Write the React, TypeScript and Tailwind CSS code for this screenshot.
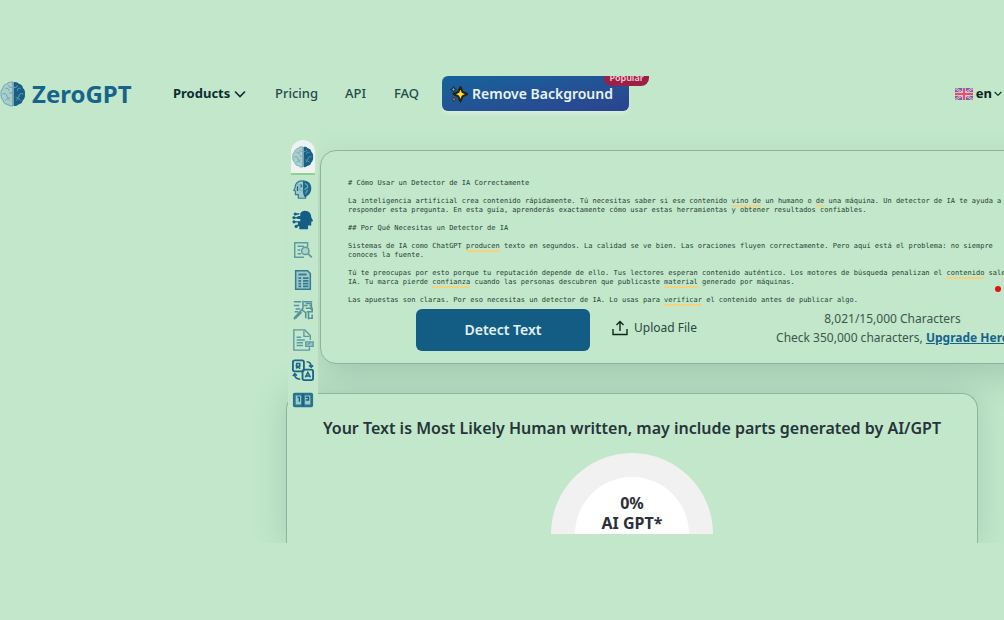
import type { ReactNode } from "react";
import clsx from "clsx";

const Hl = ({ children }: { children: ReactNode }) => (
  <span className="border-b-2 border-[#f7d27c]">{children}</span>
);

const Brain = ({ className }: { className?: string }) => (
  <svg viewBox="0 0 24 24" className={className} aria-hidden="true">
    <path
      d="M11.5 1C9 .6 7.500 1.500 6.700 2.500 4.500 3 3 4.600 2.800 6.500 1.200 8 .600 10 1 12c-.4 2.500.4 4.500 2 6 .3 2 2 3.400 4 3.600 1.200 1.200 2.800 1.600 4.500 1.400z"
      fill="#a9cfcd"
      stroke="#78a9b5"
      strokeWidth="1"
    />
    <path
      d="M5 7c2-1 3 0 3 2M2.500 12c2-1 4 0 4 2s2 2 3 1M5 18c1-2 3-2 4 0M8 4c0 2 2 2 3 2M8.500 11h3"
      fill="none"
      stroke="#6a9eb0"
      strokeWidth="0.900"
    />
    <path
      d="M12.500 1c2.500-.4 4 .5 4.800 1.500 2.200.5 3.700 2.100 3.900 4C22.800 8 23.400 10 23 12c.4 2.500-.4 4.500-2 6-.3 2-2 3.400-4 3.600-1.200 1.200-2.800 1.600-4.500 1.400z"
      fill="#175f86"
    />
    <path
      d="M19 7c-2-1-3 0-3 2M21.500 12c-2-1-4 0-4 2s-2 2-3 1M19 18c-1-2-3-2-4 0M16 4c0 2-2 2-3 2"
      fill="none"
      stroke="#6ba3b5"
      strokeWidth="0.900"
    />
  </svg>
);

const Chevron = ({ className }: { className?: string }) => (
  <svg viewBox="0 0 12 8" className={className} fill="none" stroke="currentColor" strokeWidth="1.600" aria-hidden="true">
    <path d="M1 1.500 6 6.500 11 1.500" />
  </svg>
);

const Sparkles = () => (
  <svg viewBox="0 0 18 18" className="size-[18px]" aria-hidden="true">
    <path
      d="M10.500 2 12.500 7 17.500 9 12.500 11.300 10.500 16.500 8.300 11.300 3.500 9 8.300 7z"
      fill="#ffe02e"
      stroke="#22211a"
      strokeWidth="2"
      strokeLinejoin="round"
    />
    <path d="M3.500 1.500 4.300 3.700 6.500 4.500 4.300 5.300 3.500 7.500 2.700 5.300.500 4.500 2.700 3.700z" fill="#55b7e8" stroke="#22211a" />
    <path d="M4 12 4.700 13.500 6.200 14.200 4.700 14.900 4 16.500 3.300 14.900 1.800 14.200 3.300 13.500z" fill="#ef6a72" stroke="#22211a" strokeWidth="0.600" />
  </svg>
);

const UkFlag = () => (
  <svg viewBox="0 0 18 12" className="h-3 w-[18px]" aria-hidden="true">
    <path d="M0 0h18v12H0z" fill="#5a70ad" />
    <path d="M0 0 18 12M18 0 0 12" stroke="#e3c9dc" strokeWidth="2.200" />
    <path d="M0 0 18 12M18 0 0 12" stroke="#e0566d" strokeWidth="1" />
    <path d="M9 0v12M0 6h18" stroke="#f0d5df" strokeWidth="3.600" />
    <path d="M9 0v12M0 6h18" stroke="#e2506a" strokeWidth="2.200" />
  </svg>
);

const tools: { label: string; icon: ReactNode; faded?: boolean }[] = [
  {
    label: "AI humanizer",
    icon: (
      <>
        <path d="M11 2C5.500 2 3.500 6 3.500 9L2 12.500l1.700.6V17h3.200v4h8v-4c3.500-2 5.100-4.600 5.100-8 0-4.500-4-7-9-7z" fill="#9dc9c8" stroke="#367c95" strokeWidth="1.300" />
        <path d="M12 2c6 0 9 3.500 9 8 0 5-3.500 9-7.500 9.500L12 15z" fill="#1c698c" />
        <path d="M7 7c2-2 4-1 4 1s-3 1-3 3 3 2 4 1M14 5c2 1 4 2 3 4s-3 1-3 3M17 12c-1 2-2 2-2 4" fill="none" stroke="#76b0b9" strokeWidth="1.200" />
        <path d="M6 8v5M10 6v3" stroke="#175f86" strokeWidth="1.300" />
      </>
    ),
  },
  {
    label: "AI chat",
    icon: (
      <>
        <path d="M14 2c5 0 7 3.500 7 7l2 4-2 .8V18h-3.500v4H8v-4.500H6.500v-4H9V11H6V7.500h3V4.800C10 3 12 2 14 2z" fill="#145d86" />
        <path d="M8 5.500H4M8 9.500H2.500M9 14H3M9 18H5" stroke="#145d86" strokeWidth="1.500" />
        <circle cx="3.500" cy="5.500" r="1.700" fill="#145d86" />
        <circle cx="2" cy="9.500" r="1.600" fill="#145d86" />
        <circle cx="2.200" cy="14" r="1.700" fill="#145d86" />
        <circle cx="4.500" cy="19" r="1.700" fill="#145d86" />
      </>
    ),
  },
  {
    label: "Plagiarism checker",
    faded: true,
    icon: (
      <g fill="none" stroke="#347b91" strokeWidth="1.600">
        <path d="M13 20H3V4h14v5" />
        <path d="M6 8h7M6 12h3M6 16h4" />
        <circle cx="14.500" cy="13" r="4" fill="#a4cdc9" />
        <path d="m17.500 16 4 4" strokeWidth="2" />
      </g>
    ),
  },
  {
    label: "Summarizer",
    icon: (
      <g fill="none" stroke="#347b91" strokeWidth="1.600">
        <path d="M4 2h13l3 3v17H4z" fill="#9fc9c8" />
        <path d="M7 6h9" strokeWidth="2" />
        <path d="M7 10h3M12 10h6M7 13h3M12 13h6M7 16h3M12 16h6M7 19h3M12 19h6" strokeWidth="2" />
      </g>
    ),
  },
  {
    label: "Paraphraser",
    faded: true,
    icon: (
      <g fill="none" stroke="#28718c" strokeWidth="1.700">
        <path d="M2 3h8M2 7h6M4 11h5M13 3h9M13 7h4M19 7h3" />
        <path d="M12 2v8l-4 5-6 7M10 11l5 4v6M15 10h7v4h-6M18 14v8M22 17v4h-5M15 5h6v7M3 14h4" />
        <path d="m3 21 7-7" strokeWidth="3" />
      </g>
    ),
  },
  {
    label: "Grammar checker",
    faded: true,
    icon: (
      <g fill="none" stroke="#347b91" strokeWidth="1.500">
        <path d="M20 12V7l-6-6H2v22h17v-3" />
        <path d="M13 2v6h6M5 9h5M5 12h9M5 15h7M5 18h7" />
        <path d="M15 14h8v5h-8zM17 17l3-2" fill="#8fbfc1" />
      </g>
    ),
  },
  {
    label: "Translator",
    icon: (
      <g fill="none" stroke="#1b658a" strokeWidth="2">
        <rect x="1" y="1.500" width="12" height="12" rx="2" />
        <rect x="11.500" y="11.500" width="11.500" height="11.500" rx="2" />
        <path d="M5 10.500V5h3.500v3H5.500L9 10.500M14.500 20l2.800-5.500 2.800 5.500M16 18.500h3" strokeWidth="1.600" />
        <path d="M16 3c3 0 5 2 5 6m-2.500-2L21 9l2-2M9 22c-4 0-6-2-6-5m-2 1.500L3 16l2.500 2" strokeWidth="1.700" />
      </g>
    ),
  },
  {
    label: "Word counter",
    icon: (
      <>
        <rect x="1" y="4" width="22" height="16" rx="2" fill="#287390" />
        <path d="M4 7h6v10H4zM14 7h6v10h-6z" fill="#9ccbca" />
        <path d="M6 9h2v5M15 9h3v3h-3M12 5v14" fill="none" stroke="#175f86" strokeWidth="1.500" />
      </>
    ),
  },
];

const Header = () => (
  <header className="flex h-[35px] items-center whitespace-nowrap">
    <a href="#" className="flex w-[173px] shrink-0 items-center gap-1.5 text-2xl font-bold text-[#18638a]">
      <Brain className="size-[26px]" />
      ZeroGPT
    </a>
    <nav className="flex items-center text-[13px] font-medium text-[#1f4a4b]">
      <button className="flex w-[102px] items-center gap-1 font-bold text-[#0d2c35]">
        Products
        <Chevron className="w-3" />
      </button>
      <a href="#" className="w-[70px]">Pricing</a>
      <a href="#" className="w-[49px]">API</a>
      <a href="#" className="w-12">FAQ</a>
    </nav>
    <button className="relative flex h-[35px] w-[187px] shrink-0 items-center gap-1 rounded-md bg-linear-to-br from-[#13639a] to-[#2b4390] pl-2 text-sm font-semibold text-[#e9f3f8] shadow-md shadow-white/30">
      <Sparkles />
      Remove Background
      <span className="absolute -top-2 -right-5 flex h-[18px] w-[45px] items-center justify-center rounded-lg bg-[#9d1f46] text-[9px] leading-none text-[#f3ccd5]">
        Popular
      </span>
    </button>
    <button className="ml-auto flex items-center gap-0.5 pr-0.5 text-[13px] font-bold text-[#0b2419]">
      <UkFlag />
      <span className="ml-px">en</span>
      <Chevron className="w-2" />
    </button>
  </header>
);

const ToolRail = () => (
  <aside className="absolute top-16 left-[288px] z-10 flex w-[30px] flex-col items-center bg-[#c2e7ca]">
    <button aria-label="AI detector" className="flex h-[35px] w-6 items-center justify-center rounded-t-xl border-b-2 border-[#8fd093] bg-[#eef3f1]">
      <Brain className="size-[22px]" />
    </button>
    {tools.map((tool) => (
      <button key={tool.label} aria-label={tool.label} className="flex h-[30px] items-center">
        <svg viewBox="0 0 24 24" className={clsx("size-[22px]", tool.faded && "opacity-70")}>
          {tool.icon}
        </svg>
      </button>
    ))}
  </aside>
);

const Editor = () => (
  <section className="-mr-10 ml-80 rounded-2xl border border-[#8fb49d] bg-[#c2e7ca] pt-7 pb-3 pl-[27px] shadow-[0_14px_32px_rgba(90,130,120,0.28)]">
    <div className="flex flex-col gap-[9px] font-['DejaVu_Sans_Mono','Liberation_Mono',monospace] text-[7px] leading-[9px] whitespace-nowrap text-[#263f35]">
      <p># Cómo Usar un Detector de IA Correctamente</p>
      <p>
        La inteligencia artificial crea contenido rápidamente. Tú necesitas saber si ese contenido <Hl>vino de</Hl> un humano o <Hl>de</Hl> una máquina. Un detector de IA te ayuda a
        <br />
        responder esta pregunta. En esta guía, aprenderás exactamente cómo usar estas herramientas y obtener resultados confiables.
      </p>
      <p>## Por Qué Necesitas un Detector de IA</p>
      <p>
        Sistemas de IA como ChatGPT <Hl>producen</Hl> texto en segundos. La calidad se ve bien. Las oraciones fluyen correctamente. Pero aquí está el problema: no siempre
        <br />
        conoces la fuente.
      </p>
      <p>
        Tú te preocupas por esto porque tu reputación depende de ello. Tus lectores esperan contenido auténtico. Los motores de búsqueda penalizan el <Hl>contenido</Hl> sale <Hl>de</Hl>
        <br />
        IA. Tu marca pierde <Hl>confianza</Hl> cuando las personas descubren que publicaste <Hl>material</Hl> generado por máquinas.
      </p>
      <p>
        Las apuestas son claras. Por eso necesitas un detector de IA. Lo usas para <Hl>verificar</Hl> el contenido antes de publicar algo.
      </p>
    </div>
    <div className="mt-1 flex items-center pr-[33px] pl-[68px] whitespace-nowrap">
      <button className="h-[42px] w-[174px] shrink-0 rounded-md bg-[#135c84] text-sm font-semibold text-[#e3f1f4]">
        Detect Text
      </button>
      <button className="mb-1 ml-[22px] flex items-center gap-1.5 text-xs text-[#2c463d]">
        <svg viewBox="0 0 16 16" className="size-4" fill="none" stroke="#12251b" strokeWidth="1.400" aria-hidden="true">
          <path d="M1 9v5.500h14V9M8 11V1.500M4.500 5 8 1.500 11.500 5" />
        </svg>
        Upload File
      </button>
      <div className="mb-1 ml-auto w-[235px] text-center text-xs leading-[19px] text-[#3d574b]">
        <p>8,021/15,000 Characters</p>
        <p>
          Check 350,000 characters,{" "}
          <a href="#" className="font-bold text-[#17638a] underline">Upgrade Here</a>
        </p>
      </div>
    </div>
  </section>
);

const Result = () => (
  <section className="mt-[29px] mr-[26px] ml-[286px] flex flex-col items-center rounded-t-2xl border border-b-0 border-[#8fb49d] bg-[#c2e7ca] pt-[22px] pb-[9px] shadow-[0_0_32px_rgba(90,130,120,0.28)]">
    <h2 className="text-base leading-6 font-semibold whitespace-nowrap text-[#26343a]">
      Your Text is Most Likely Human written, may include parts generated by AI/GPT
    </h2>
    <div className="mt-[13px] flex h-[81px] w-[162px] items-end justify-center rounded-t-full bg-[#f1f1f1]">
      <div className="flex h-[57px] w-[114px] flex-col items-center rounded-t-full bg-white pt-4 text-base leading-5 font-bold text-[#2c3039]">
        <span>0%</span>
        <span>AI GPT*</span>
      </div>
    </div>
  </section>
);

export default function App() {
  return (
    <div className="min-h-screen bg-[#c2e7ca] py-[76px] font-['Noto_Sans','Open_Sans',sans-serif]">
      <div className="relative overflow-hidden">
        <Header />
        <main className="pt-[39px]">
          <ToolRail />
          <Editor />
          <Result />
        </main>
        {/* recording indicator */}
        <span className="absolute top-[210px] right-[3px] size-1.5 rounded-full bg-[#e01212]" />
      </div>
    </div>
  );
}
